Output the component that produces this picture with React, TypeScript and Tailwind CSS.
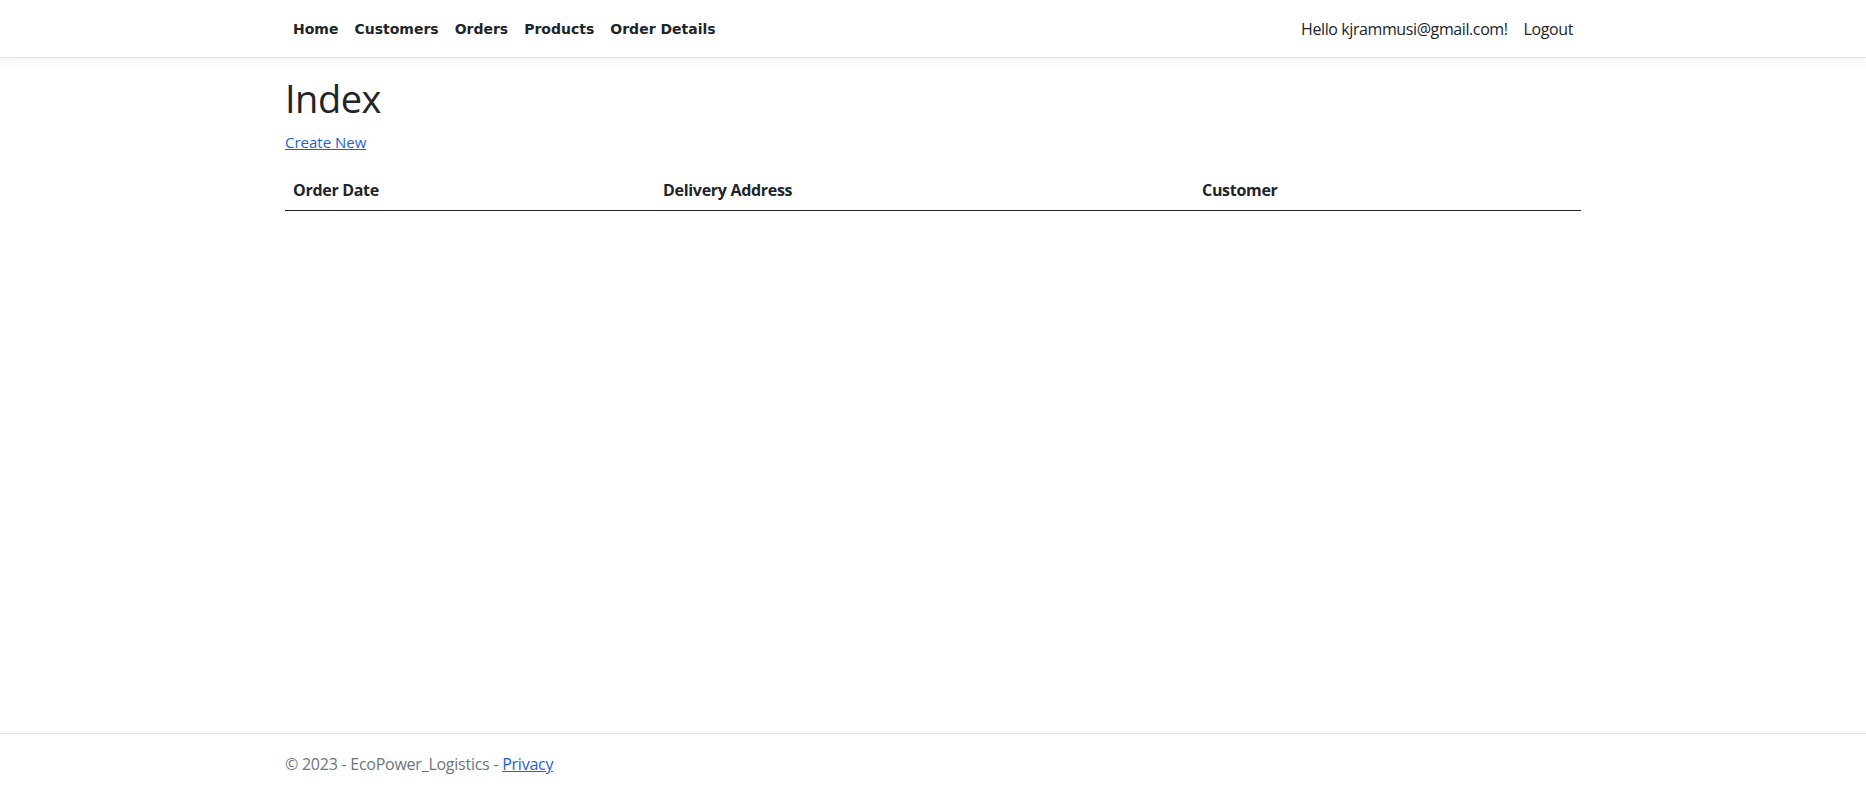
import React from "react";

const navLinks = ["Home", "Customers", "Orders", "Products", "Order Details"];

export default function App() {
  return (
    <div
      className="relative min-h-[793px] bg-white text-[#212529] text-base"
      style={{ fontFamily: '"Open Sans", "Noto Sans", sans-serif' }}
    >
      <header>
        <nav className="h-[58px] border-b border-[#dee2e6] bg-white shadow-[0_4px_12px_rgba(0,0,0,0.05)] mb-4">
          <div className="mx-auto flex h-full max-w-[1320px] items-center justify-between px-3">
            <ul className="flex items-center mt-[2px]">
              {navLinks.map((l) => (
                <li key={l}>
                  <a
                    href="#"
                    className="block px-2 py-2 text-[14px] font-bold text-[#212529]"
                    style={{ fontFamily: '"DejaVu Sans", sans-serif' }}
                  >
                    {l}
                  </a>
                </li>
              ))}
            </ul>
            <ul className="flex items-center">
              <li>
                <a href="#" className="block px-2 py-2 text-base text-[#212529] tracking-[-0.4px]">
                  Hello kjrammusi@gmail.com!
                </a>
              </li>
              <li>
                <button className="block px-2 py-2 text-base text-[#212529] tracking-[-0.4px]">
                  Logout
                </button>
              </li>
            </ul>
          </div>
        </nav>
      </header>
      <main className="mx-auto max-w-[1320px] px-3 pb-4">
        <h1 className="mt-[5px] mb-2 text-[38px] leading-[48px] font-normal tracking-[-0.5px]">Index</h1>
        <p className="mb-4 leading-6">
          <a href="#" className="text-[15px] text-[#1e62d0] underline">
            Create New
          </a>
        </p>
        <table className="w-full border-collapse">
          <thead>
            <tr className="border-b-[1.5px] border-[#212529]">
              <th className="w-[370px] px-2 py-2 text-left text-base font-bold leading-6 tracking-[-0.3px]">
                Order Date
              </th>
              <th className="w-[539px] px-2 py-2 text-left text-base font-bold leading-6 tracking-[-0.3px]">
                Delivery Address
              </th>
              <th className="px-2 py-2 text-left text-base font-bold leading-6 tracking-[-0.3px]">
                Customer
              </th>
            </tr>
          </thead>
          <tbody></tbody>
        </table>
      </main>
      <footer className="absolute bottom-0 w-full h-[60px] border-t border-[#dee2e6] text-[#6c757d]">
        <div className="mx-auto max-w-[1320px] px-3 text-base leading-[60px] tracking-[-0.25px]">
          &copy; 2023 - EcoPower_Logistics -{" "}
          <a href="#" className="text-[#1e62d0] underline">
            Privacy
          </a>
        </div>
      </footer>
    </div>
  );
}
